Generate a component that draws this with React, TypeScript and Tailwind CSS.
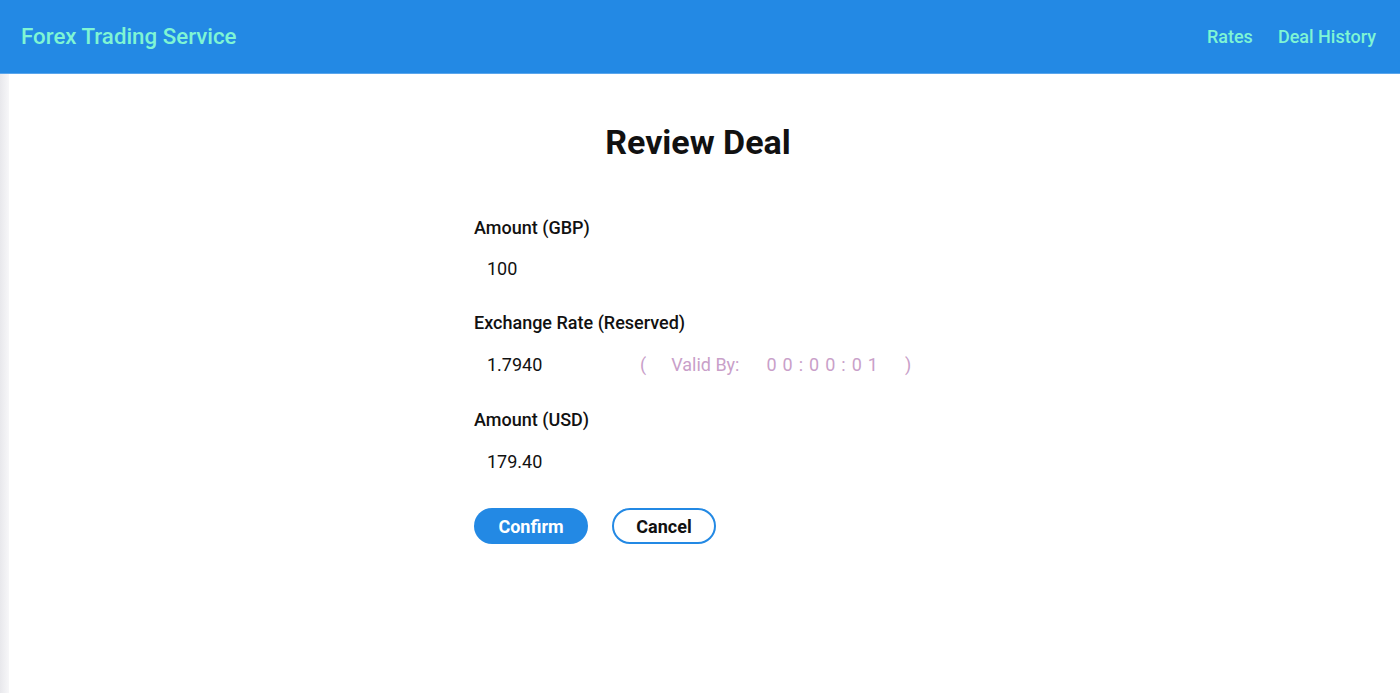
import React from "react";

export default function App() {
  return (
    <div className="min-h-[693px] w-full bg-white font-['Roboto',sans-serif] flex flex-col">
      {/* Header */}
      <header className="h-[74px] bg-[#2389e4] border-b border-[#5aa6ec] flex items-center justify-between pl-[21px] pr-[24px]">
        <h1 className="text-[22.3px] font-medium text-[#7ff5d4]">Forex Trading Service</h1>
        <nav className="flex items-center gap-[25px] text-[18px] font-medium text-[#7ff5d4]">
          <a>Rates</a>
          <a>Deal History</a>
        </nav>
      </header>

      <div className="flex flex-1">
        {/* left edge shade */}
        <div className="w-[9px] bg-gradient-to-r from-[#e8e8ec] to-[#f7f7f9]" />

        <main className="flex-1 flex flex-col items-center pt-[48px]">
          <h2 className="text-[34px] font-bold text-[#111] leading-[40px] -ml-[13px]">Review Deal</h2>

          <div className="w-[452px] -ml-[9px] mt-[56px] flex flex-col text-[18px] text-[#111]">
            <div className="font-medium leading-[20px]">Amount (GBP)</div>
            <div className="pl-[13px] mt-[21px] leading-[20px]">100</div>

            <div className="font-medium leading-[20px] mt-[34px]">Exchange Rate (Reserved)</div>
            <div className="pl-[13px] mt-[22px] leading-[20px] flex items-center">
              <span className="w-[153px]">1.7940</span>
              <span className="flex items-center text-[#c9a0c9]">
                <span>(</span>
                <span className="ml-[25px]">Valid By:</span>
                <span className="ml-[27px] tracking-[6px]">00:00:01</span>
                <span className="ml-[21px]">)</span>
              </span>
            </div>

            <div className="font-medium leading-[20px] mt-[35px]">Amount (USD)</div>
            <div className="pl-[13px] mt-[22px] leading-[20px]">179.40</div>

            <div className="flex items-center gap-[24px] mt-[36px]">
              <button className="h-[36px] w-[114px] rounded-full bg-[#2389e4] text-white text-[18px] font-bold">
                Confirm
              </button>
              <button className="h-[36px] w-[104px] rounded-full border-2 border-[#2389e4] bg-white text-[#111] text-[18px] font-bold">
                Cancel
              </button>
            </div>
          </div>
        </main>
      </div>
    </div>
  );
}
